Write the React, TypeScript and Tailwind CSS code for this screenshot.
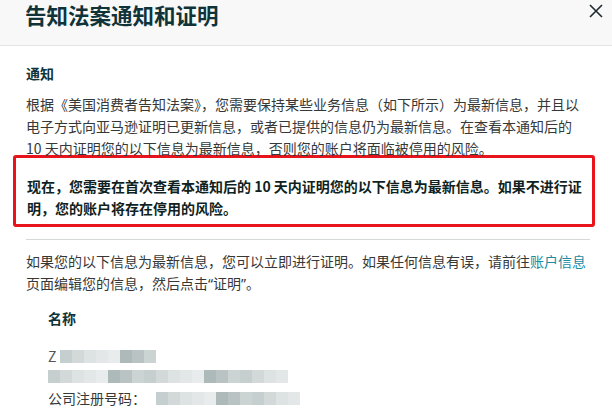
import React from 'react';

const font = { fontFamily: '"Noto Sans CJK SC", "Noto Sans", sans-serif' };

const blockShades = ['#d3d9d9', '#b9c3c4', '#e3e7e7', '#c6cfd0', '#aeb9ba', '#dde2e2', '#cbd3d3', '#e9ecec'];

const Pixels: React.FC<{ count: number }> = ({ count }) => (
  <div className="flex blur-[0.6px]">
    {Array.from({ length: count }).map((_, i) => (
      <span key={i} className="block w-[12px] h-[13px]" style={{ backgroundColor: blockShades[(i * 5 + 3) % blockShades.length] }} />
    ))}
  </div>
);

export default function App() {
  return (
    <div className="w-[612px] h-[412px] overflow-hidden bg-white text-[#363838]" style={font}>
      <div className="h-[46px] bg-[#f8f8f8] border-b border-[#e4e4e4] flex justify-between pl-[25px] pr-[9px]">
        <h1 className="text-[21.5px] leading-[29px] font-bold text-[#0f3339]">告知法案通知和证明</h1>
        <button className="mt-[4px] w-[14px] h-[14px] text-[#1b2b2e]">
          <svg viewBox="0 0 14 14" className="w-[14px] h-[14px]" fill="none" stroke="currentColor" strokeWidth="1.6">
            <path d="M1 1L13 13M13 1L1 13" />
          </svg>
        </button>
      </div>

      <div className="px-[26px] pt-[16px]">
        <h2 className="text-[14px] leading-[22px] font-bold text-[#0f3339]">通知</h2>
        <p className="mt-[9px] text-[14px] leading-[22px]">
          根据《美国消费者告知法案》，您需要保持某些业务信息（如下所示）为最新信息，并且以电子方式向亚马逊证明已更新信息，或者已提供的信息仍为最新信息。在查看本通知后的 10 天内证明您的以下信息为最新信息，否则您的账户将面临被停用的风险。
        </p>

        <div className="-ml-[13px] -mr-[9px] -mt-[4px] border-[3px] border-[#e8141c] rounded-[3px] pl-[11px] pr-[6px] pt-[17px] pb-[5px]">
          <p className="text-[14px] leading-[22px] font-bold text-[#0f1f22]">
            现在，您需要在首次查看本通知后的 10 天内证明您的以下信息为最新信息。如果不进行证明，您的账户将存在停用的风险。
          </p>
        </div>

        <div className="mt-[12px] -mr-[4px] border-t border-[#d5d9d9]" />

        <p className="mt-[10px] text-[14px] leading-[22px]">
          如果您的以下信息为最新信息，您可以立即进行证明。如果任何信息有误，请前往<a className="text-[#1a8ba0]">账户信息</a>页面编辑您的信息，然后点击<span style={{ fontFamily: '"Noto Sans", sans-serif' }}>“</span>证明<span style={{ fontFamily: '"Noto Sans", sans-serif' }}>”</span>。
        </p>

        <div className="pl-[22px] mt-[12px]">
          <h3 className="text-[14px] leading-[22px] font-bold text-[#0f3339]">名称</h3>
          <div className="mt-[21px] flex flex-col gap-[7px]">
            <div className="flex items-center gap-[4px]">
              <span className="text-[14px] leading-[13px] text-[#555]">Z</span>
              <Pixels count={8} />
            </div>
            <Pixels count={20} />
            <div className="flex items-center">
              <span className="text-[14px] leading-[16px]">公司注册号码：</span>
              <span className="ml-[10px]"><Pixels count={12} /></span>
            </div>
          </div>
        </div>
      </div>
    </div>
  );
}
